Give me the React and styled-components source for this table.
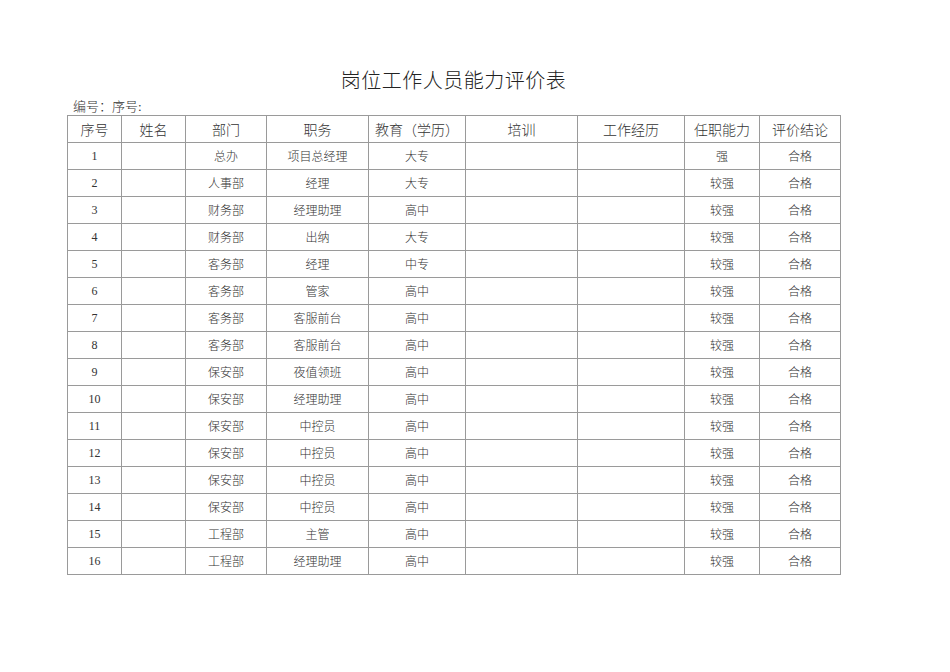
import React from 'react';
import styled, { createGlobalStyle } from 'styled-components';

const Global = createGlobalStyle`
  body {
    margin: 0;
    background: #fff;
    font-family: "Liberation Serif", "Noto Sans CJK SC", serif;
    color: #222;
  }
`;

const Page = styled.div`
  width: 950px;
  height: 672px;
  padding: 67px 0 0 67px;
  box-sizing: border-box;
`;

const Sheet = styled.div`
  width: 773px;
`;

const Title = styled.h1`
  margin: 0;
  text-align: center;
  font-size: 20px;
  font-weight: 300;
  line-height: 28px;
  letter-spacing: 0.5px;
  color: #222;
`;

const Meta = styled.div`
  margin-top: 5px;
  padding-left: 6px;
  font-size: 13px;
  font-weight: 300;
  line-height: 14px;
  height: 14px;
  color: #333;
`;

const Table = styled.table`
  border-collapse: collapse;
  table-layout: fixed;
  width: 773px;
  margin-top: 1px;
`;

const Th = styled.th`
  border: 1px solid #9a9a9a;
  height: 26px;
  padding: 0;
  font-size: 14px;
  font-weight: 300;
  color: #333;
  text-align: center;
`;

const Td = styled.td`
  border: 1px solid #9a9a9a;
  height: 26px;
  padding: 0;
  font-size: 12px;
  font-weight: 300;
  color: #333;
  text-align: center;
`;

const widths = [54, 64, 81, 102, 97, 112, 107, 75, 81];
const headers = ['序号', '姓名', '部门', '职务', '教育（学历）', '培训', '工作经历', '任职能力', '评价结论'];

const rows = [
  ['总办', '项目总经理', '大专', '强'],
  ['人事部', '经理', '大专', '较强'],
  ['财务部', '经理助理', '高中', '较强'],
  ['财务部', '出纳', '大专', '较强'],
  ['客务部', '经理', '中专', '较强'],
  ['客务部', '管家', '高中', '较强'],
  ['客务部', '客服前台', '高中', '较强'],
  ['客务部', '客服前台', '高中', '较强'],
  ['保安部', '夜值领班', '高中', '较强'],
  ['保安部', '经理助理', '高中', '较强'],
  ['保安部', '中控员', '高中', '较强'],
  ['保安部', '中控员', '高中', '较强'],
  ['保安部', '中控员', '高中', '较强'],
  ['保安部', '中控员', '高中', '较强'],
  ['工程部', '主管', '高中', '较强'],
  ['工程部', '经理助理', '高中', '较强'],
];

export default function App() {
  return (
    <Page>
      <Global />
      <Sheet>
        <Title>岗位工作人员能力评价表</Title>
        <Meta>编号：序号:</Meta>
        <Table>
          <colgroup>
            {widths.map((w, i) => (
              <col key={i} style={{ width: w }} />
            ))}
          </colgroup>
          <thead>
            <tr>
              {headers.map((h) => (
                <Th key={h}>{h}</Th>
              ))}
            </tr>
          </thead>
          <tbody>
            {rows.map((r, i) => (
              <tr key={i}>
                <Td>{i + 1}</Td>
                <Td />
                <Td>{r[0]}</Td>
                <Td>{r[1]}</Td>
                <Td>{r[2]}</Td>
                <Td />
                <Td />
                <Td>{r[3]}</Td>
                <Td>合格</Td>
              </tr>
            ))}
          </tbody>
        </Table>
      </Sheet>
    </Page>
  );
}
